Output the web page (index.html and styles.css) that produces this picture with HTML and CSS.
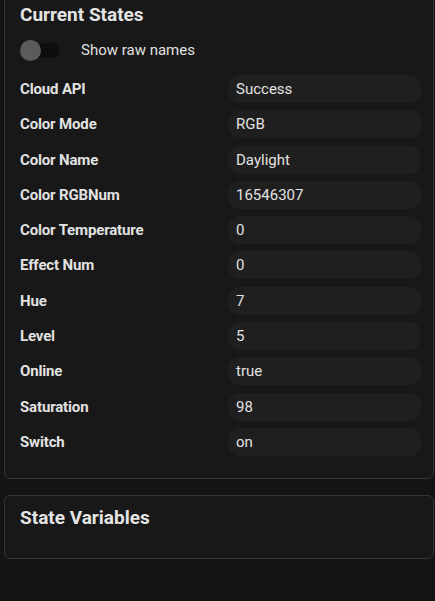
FILE: index.html
```html
<!DOCTYPE html>
<html lang="en">
<head>
<meta charset="utf-8">
<title>Current States</title>
<link rel="stylesheet" href="styles.css">
</head>
<body>
<div class="page">
  <section class="card card-states">
    <h2 class="card-title">Current States</h2>
    <label class="toggle-row">
      <span class="toggle"><span class="toggle-thumb"></span></span>
      <span class="toggle-label">Show raw names</span>
    </label>
    <div class="state-grid">
      <div class="state-name">Cloud API</div><div class="state-value">Success</div>
      <div class="state-name">Color Mode</div><div class="state-value">RGB</div>
      <div class="state-name">Color Name</div><div class="state-value">Daylight</div>
      <div class="state-name">Color RGBNum</div><div class="state-value">16546307</div>
      <div class="state-name">Color Temperature</div><div class="state-value">0</div>
      <div class="state-name">Effect Num</div><div class="state-value">0</div>
      <div class="state-name">Hue</div><div class="state-value">7</div>
      <div class="state-name">Level</div><div class="state-value">5</div>
      <div class="state-name">Online</div><div class="state-value">true</div>
      <div class="state-name">Saturation</div><div class="state-value">98</div>
      <div class="state-name">Switch</div><div class="state-value">on</div>
    </div>
  </section>
  <section class="card card-vars">
    <h2 class="card-title">State Variables</h2>
  </section>
</div>
</body>
</html>
```
FILE: styles.css
```css
html, body {
  margin: 0;
  padding: 0;
  background: #141414;
  color: #e2e2e2;
  font-family: Roboto, "Liberation Sans", sans-serif;
}
.page {
  display: flex;
  flex-direction: column;
  gap: 16px;
  padding: 0 1px 0 4px;
  margin-top: -10px;
}
.card {
  background: #181818;
  border: 1px solid #353535;
  border-radius: 6px;
  padding: 10px 12px 22px 15px;
  display: flex;
  flex-direction: column;
}
.card-vars {
  padding-top: 8px;
  padding-bottom: 26px;
}
.card-title {
  margin: 0;
  font-size: 19px;
  font-weight: 700;
  line-height: 28px;
  color: #e4e4e4;
}
.toggle-row {
  display: flex;
  align-items: center;
  height: 20px;
  margin-top: 11px;
}
.toggle {
  position: relative;
  width: 40px;
  height: 15px;
  border-radius: 8px;
  background: #0e0e0e;
}
.toggle-thumb {
  position: absolute;
  left: 0;
  top: -3px;
  width: 21px;
  height: 21px;
  border-radius: 50%;
  background: #5b5b5b;
}
.toggle-label {
  margin-left: 21px;
  font-size: 15px;
  color: #e0e0e0;
}
.state-grid {
  margin-top: 15px;
  display: grid;
  grid-template-columns: 1fr 1fr;
  column-gap: 15px;
  row-gap: 7.3px;
  align-items: center;
}
.state-name {
  font-size: 15px;
  font-weight: 700;
  letter-spacing: -0.15px;
  color: #e2e2e2;
}
.state-value {
  height: 28px;
  line-height: 28px;
  padding-left: 8px;
  border-radius: 12px;
  background: #1f1f1f;
  font-size: 15px;
  color: #e2e2e2;
}
```
